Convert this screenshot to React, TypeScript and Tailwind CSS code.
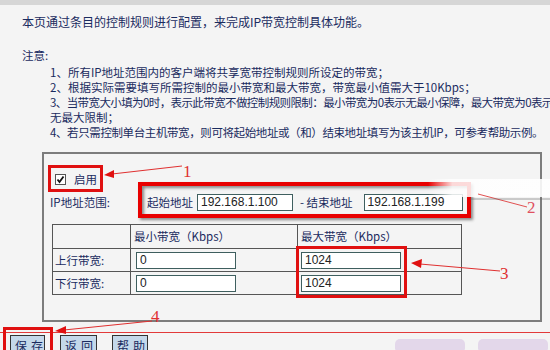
import React from 'react'

const cjk = { fontFamily: '"Noto Sans CJK SC", "Liberation Sans", sans-serif' }

// small bordered text field, read-only
function Field({ value, className }: { value: string; className: string }) {
  return (
    <input
      readOnly
      value={value}
      className={`h-[17px] border border-[#3f5f5f] bg-white px-[3px] text-[12px] leading-[15px] text-[#222] font-['Liberation_Sans',sans-serif] outline-none ${className}`}
    />
  )
}

function Btn({ label, w }: { label: string; w: string }) {
  return (
    <button
      className={`h-[22px] ${w} whitespace-nowrap border border-[#333] bg-[#c4d8ea] text-[12px] leading-[20px] tracking-[4px] text-[#1a2b5f] pl-[4px]`}
    >
      {label}
    </button>
  )
}

export default function App() {
  return (
    <div
      className="relative w-[550px] h-[350px] overflow-hidden bg-[#f4f4f4] text-[11.5px] leading-[15px] text-[#1a2b5f]"
      style={cjk}
    >
      <div className="h-[5px] bg-[#d6d6d6]" />

      {/* intro */}
      <p className="pl-[22px] pt-[9px] whitespace-nowrap text-[12px]">本页通过条目的控制规则进行配置，来完成IP带宽控制具体功能。</p>

      <p className="pl-[22px] pt-[19px] whitespace-nowrap">注意:</p>
      <div className="pl-[50px] pt-[2px] whitespace-nowrap">
        <p>1、所有IP地址范围内的客户端将共享宽带控制规则所设定的带宽；</p>
        <p>2、根据实际需要填写所需控制的最小带宽和最大带宽，带宽最小值需大于10Kbps；</p>
        <p className="tracking-[-0.6px]">3、当带宽大小填为0时，表示此带宽不做控制规则限制：最小带宽为0表示无最小保障，最大带宽为0表示</p>
        <p>无最大限制；</p>
        <p className="tracking-[-0.4px]">4、若只需控制单台主机带宽，则可将起始地址或（和）结束地址填写为该主机IP，可参考帮助示例。</p>
      </div>

      {/* settings box */}
      <div className="ml-[42px] mt-[12px] w-[500px] h-[170px] border-2 border-[#7c7c7c] pl-[8px] pt-[18px]">
        <label className="flex items-center gap-[8px] pl-[3px] h-[15px]">
          <span className="w-[11px] h-[11px] border border-[#555] bg-white flex items-center justify-center">
            <svg width="9" height="9" viewBox="0 0 9 9">
              <path d="M1.5 4.5 L3.5 7 L7.5 1.5" stroke="#111" strokeWidth="1.8" fill="none" />
            </svg>
          </span>
          <span>启用</span>
        </label>

        <div className="flex items-center mt-[6px] h-[18px] -ml-[2px]">
          <span className="w-[97px]">IP地址范围:</span>
          <span className="mr-[4px]">起始地址</span>
          <Field value="192.168.1.100" className="w-[96px]" />
          <span className="ml-[7px] mr-[11px]">- 结束地址</span>
          <Field value="192.168.1.199" className="w-[99px]" />
        </div>

        <table className="mt-[13px] border-collapse w-[410px]">
          <tbody>
            <tr className="h-[24px]">
              <td className="w-[78px] border border-[#555]" />
              <td className="w-[167px] border border-[#555] pl-[3px]">最小带宽（Kbps）</td>
              <td className="border border-[#555] pl-[3px]">最大带宽（Kbps）</td>
            </tr>
            <tr className="h-[23px]">
              <td className="border border-[#555] pl-[2px]">上行带宽:</td>
              <td className="border border-[#555] pl-[5px]">
                <Field value="0" className="w-[100px] block" />
              </td>
              <td className="border border-[#555] pl-[3px]">
                <Field value="1024" className="w-[100px] block" />
              </td>
            </tr>
            <tr className="h-[23px]">
              <td className="border border-[#555] pl-[2px]">下行带宽:</td>
              <td className="border border-[#555] pl-[5px]">
                <Field value="0" className="w-[100px] block" />
              </td>
              <td className="border border-[#555] pl-[3px]">
                <Field value="1024" className="w-[100px] block" />
              </td>
            </tr>
          </tbody>
        </table>
      </div>

      <div className="mt-[10px] h-px bg-[#e23a3a]" />
      <div className="flex gap-[15px] pl-[10px] pt-[2px]">
        <Btn label="保存" w="w-[35px]" />
        <Btn label="返回" w="w-[37px]" />
        <Btn label="帮助" w="w-[36px]" />
      </div>

      {/* annotation layer drawn over the screenshot */}
      <svg className="absolute inset-0 pointer-events-none" width="550" height="350">
        <defs>
          <filter id="sh" x="-10%" y="-30%" width="120%" height="160%">
            <feDropShadow dx="2" dy="2" stdDeviation="1.5" floodColor="#000" floodOpacity="0.45" />
          </filter>
          <linearGradient id="fog" x1="0" x2="1">
            <stop offset="0" stopColor="#fff" stopOpacity="0" />
            <stop offset="0.2" stopColor="#fff" stopOpacity="0.85" />
            <stop offset="1" stopColor="#fff" stopOpacity="0.9" />
          </linearGradient>
        </defs>

        {/* 1 */}
        <rect x="49.5" y="166.5" width="52" height="24" fill="none" stroke="#e01010" strokeWidth="3" />
        <line x1="182" y1="166" x2="112" y2="174" stroke="#e03030" strokeWidth="1" />
        <path d="M104 175 L114 170 L114 178 Z" fill="#e01010" />
        <text x="183" y="177" fill="#e03030" fontSize="17" fontFamily="Liberation Serif, serif">1</text>

        {/* 2 */}
        <rect x="140" y="184" width="329" height="32" fill="none" stroke="#e80000" strokeWidth="4" filter="url(#sh)" />
        <rect x="428" y="179" width="122" height="18" fill="url(#fog)" />
        <line x1="478" y1="194" x2="527" y2="207" stroke="#e05050" strokeWidth="1" />
        <line x1="470" y1="199" x2="550" y2="199" stroke="#666" strokeWidth="1" opacity="0.6" />
        <text x="527" y="213" fill="#e05060" fontSize="17" fontFamily="Liberation Serif, serif">2</text>

        {/* 3 */}
        <rect x="297.5" y="247.5" width="108" height="49" fill="none" stroke="#e01010" strokeWidth="3" />
        <line x1="420" y1="264" x2="500" y2="271" stroke="#e03030" strokeWidth="1" />
        <path d="M411 263 L422 259 L421 268 Z" fill="#e01010" />
        <text x="500" y="279" fill="#e03030" fontSize="17" fontFamily="Liberation Serif, serif">3</text>

        {/* 4 */}
        <rect x="4.5" y="328.5" width="47" height="26" fill="none" stroke="#e01010" strokeWidth="3" />
        <line x1="152" y1="321" x2="64" y2="330" stroke="#e03030" strokeWidth="1" />
        <path d="M55 331 L66 326 L66 334 Z" fill="#e01010" />
        <text x="151" y="322" fill="#e03030" fontSize="17" fontFamily="Liberation Serif, serif">4</text>

        {/* bottom-right watermark smudge */}
        <rect x="395" y="339" width="70" height="14" rx="5" fill="#dccbe6" opacity="0.7" />
        <rect x="478" y="339" width="70" height="14" rx="5" fill="#dccbe6" opacity="0.7" />
      </svg>
    </div>
  )
}
